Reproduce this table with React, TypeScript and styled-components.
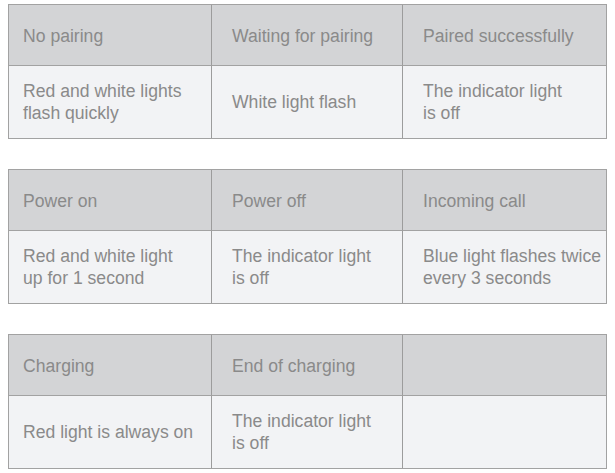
import React from "react";
import styled, { createGlobalStyle } from "styled-components";

const Global = createGlobalStyle`
  html, body { margin: 0; padding: 0; background: #ffffff; }
  body { font-family: "Liberation Sans", Arial, sans-serif; }
`;

const Page = styled.div`
  display: flex;
  flex-direction: column;
  gap: 30px;
  padding: 4px 8px 0 8px;
  width: 599px;
`;

const Table = styled.div`
  display: grid;
  grid-template-columns: 203px 191px 1fr;
  grid-template-rows: 60px 73px;
  border: 1px solid #a2a2a2;
  box-sizing: border-box;
`;

const Cell = styled.div<{ $head?: boolean }>`
  display: flex;
  align-items: center;
  box-sizing: border-box;
  padding: ${(p) => (p.$head ? "2px" : "0")} 0 0 20px;
  background: ${(p) => (p.$head ? "#d3d4d6" : "#f2f3f5")};
  border-right: 1px solid #9c9c9c;
  border-top: ${(p) => (p.$head ? "none" : "1px solid #a2a2a2")};
  color: #8a8a8a;
  font-size: 17.6px;
  line-height: 22px;
  white-space: nowrap;
  &:nth-child(3n + 1) { padding-left: 14px; }
  &:nth-child(3n) { border-right: none; }
`;

type Row = [string, string, string];
const tables: { head: Row; body: Row }[] = [
  {
    head: ["No pairing", "Waiting for pairing", "Paired successfully"],
    body: ["Red and white lights\nflash quickly", "White light flash", "The indicator light\nis off"],
  },
  {
    head: ["Power on", "Power off", "Incoming call"],
    body: ["Red and white light\nup for 1 second", "The indicator light\nis off", "Blue light flashes twice\nevery 3 seconds"],
  },
  {
    head: ["Charging", "End of charging", ""],
    body: ["Red light is always on", "The indicator light\nis off", ""],
  },
];

const Lines = ({ text }: { text: string }) => (
  <span>
    {text.split("\n").map((l, i) => (
      <React.Fragment key={i}>
        {i > 0 && <br />}
        {l}
      </React.Fragment>
    ))}
  </span>
);

export default function App() {
  return (
    <>
      <Global />
      <Page>
        {tables.map((t, ti) => (
          <Table key={ti}>
            {t.head.map((h, i) => (
              <Cell $head key={"h" + i}>
                <Lines text={h} />
              </Cell>
            ))}
            {t.body.map((b, i) => (
              <Cell key={"b" + i}>
                <Lines text={b} />
              </Cell>
            ))}
          </Table>
        ))}
      </Page>
    </>
  );
}
